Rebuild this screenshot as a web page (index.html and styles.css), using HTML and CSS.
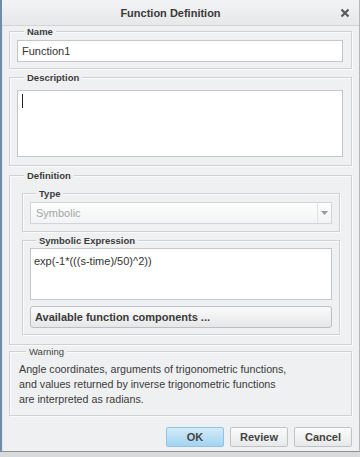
FILE: index.html
```html
<!DOCTYPE html>
<html lang="en">
<head>
  <meta charset="UTF-8" />
  <meta name="viewport" content="width=device-width, initial-scale=1.0"/>
  <title>Function Definition</title>
  <link rel="stylesheet" href="styles.css">
</head>
<body>
  <div class="dialog">
    <div class="title-bar">
      <span class="title">Function Definition</span>
      <button class="close-btn" title="Close">
        <svg width="10" height="10" viewBox="0 0 10 10"><path d="M1.5 1.5 L8.5 8.5 M8.5 1.5 L1.5 8.5" stroke="#5a5a5a" stroke-width="2.2"/></svg>
      </button>
    </div>

    <div class="content">
      <fieldset class="group group-name">
        <legend>Name</legend>
        <input type="text" class="field" value="Function1">
      </fieldset>

      <fieldset class="group group-desc">
        <legend>Description</legend>
        <div class="field area area-desc"><span class="caret"></span></div>
      </fieldset>

      <fieldset class="group group-def">
        <legend>Definition</legend>

        <fieldset class="group sub sub-type">
          <legend>Type</legend>
          <div class="select">
            <span class="select-value">Symbolic</span>
            <span class="select-arrow">
              <svg width="7" height="4" viewBox="0 0 7 4"><path d="M0 0 H7 L3.5 4 Z" fill="#9a9a9a"/></svg>
            </span>
          </div>
        </fieldset>

        <fieldset class="group sub sub-expr">
          <legend>Symbolic Expression</legend>
          <div class="field area area-expr">exp(-1*(((s-time)/50)^2))</div>
          <button class="wide-btn">Available function components ...</button>
        </fieldset>
      </fieldset>

      <fieldset class="group group-warn">
        <legend>Warning</legend>
        <p class="warn-text">Angle coordinates, arguments of trigonometric functions,<br>
          and values returned by inverse trigonometric functions<br>
          are interpreted as radians.</p>
      </fieldset>

      <div class="actions">
        <button class="btn btn-primary">OK</button>
        <button class="btn">Review</button>
        <button class="btn">Cancel</button>
      </div>
    </div>
  </div>
</body>
</html>
```

FILE: styles.css
```css
body {
  margin: 0;
  background: #d9dadb;
  font-family: "Liberation Sans", Arial, sans-serif;
  color: #333;
}
.dialog {
  width: 357px;
  height: 451px;
  background: #eff0f1;
  border-left: 2px solid #6f8dab;
  border-right: 1px solid #b4b7ba;
  border-bottom: 1px solid #8e9195;
  box-shadow: inset 1px 0 0 #dfe4e9;
}
.title-bar {
  height: 25px;
  display: flex;
  align-items: center;
  justify-content: center;
  position: relative;
  background: linear-gradient(#f2f3f4, #e7e8e9);
  border-bottom: 1px solid #d2d4d6;
  padding-right: 20px;
}
.title {
  font-size: 11px;
  font-weight: bold;
  color: #3a3a3a;
}
.close-btn {
  position: absolute;
  right: 9px;
  top: 8px;
  padding: 0;
  border: none;
  background: none;
  line-height: 0;
}
.content {
  padding: 0 7px 0 7px;
}
.group {
  margin: 0;
  padding: 0 8px 6px 7px;
  border: 1px solid #cfd2d5;
  box-shadow: inset 1px 1px 0 #fbfbfc, 1px 1px 0 #fbfbfc;
  min-width: 0;
}
.group legend {
  margin-left: 7px;
  padding: 0 3px;
  font-size: 9.5px;
  font-weight: bold;
  line-height: 11px;
  color: #3c3c3c;
  background: #eff0f1;
}
.field {
  display: block;
  box-sizing: border-box;
  width: 100%;
  background: #fff;
  border: 1px solid #c4c6c9;
  font-family: "Liberation Sans", Arial, sans-serif;
  font-size: 11px;
  color: #333;
}
input.field {
  height: 22px;
  padding: 0 4px;
  margin-top: 3px;
}
.group-desc {
  margin-top: 3px;
  padding-bottom: 8px;
}
.area-desc {
  height: 67px;
  margin-top: 7px;
  padding: 3px 4px;
}
.caret {
  display: block;
  width: 1px;
  height: 14px;
  background: #222;
}
.group-def {
  margin-top: 4px;
  padding: 7px 11px 9px 12px;
}
.group-def > legend {
  margin-left: 2px;
}
.sub {
  padding: 0 7px 7px 7px;
}
.sub legend {
  margin-left: 6px;
}
.sub-expr {
  margin-top: 3px;
  padding-bottom: 6px;
}
.select {
  margin-top: 3px;
  height: 22px;
  box-sizing: border-box;
  display: flex;
  align-items: stretch;
  border: 1px solid #d2d4d6;
  background: linear-gradient(#fdfdfd, #f2f3f4);
  font-size: 11px;
  color: #a3a5a7;
}
.select-value {
  flex: 1;
  display: flex;
  align-items: center;
  padding-left: 5px;
}
.select-arrow {
  width: 13px;
  display: flex;
  align-items: center;
  justify-content: center;
  border-left: 1px solid #e0e2e4;
}
.area-expr {
  height: 52px;
  margin-top: 2px;
  padding: 6px 3px;
}
.wide-btn {
  display: block;
  width: 100%;
  height: 22px;
  margin-top: 6px;
  padding: 0 4px;
  text-align: left;
  border: 1px solid #bcbec1;
  border-radius: 3px;
  background: linear-gradient(#fafafa, #e6e7e8);
  font-family: "Liberation Sans", Arial, sans-serif;
  font-size: 11px;
  font-weight: bold;
  color: #3a3a3a;
}
.group-warn {
  margin-top: 1px;
  padding: 0 8px 8px 9px;
}
.group-warn legend {
  font-weight: normal;
  color: #444;
}
.warn-text {
  margin: 5px 0 0;
  font-size: 10.7px;
  line-height: 15px;
  color: #3a3a3a;
}
.actions {
  display: flex;
  justify-content: flex-end;
  gap: 6px;
  margin-top: 11px;
}
.btn {
  width: 58px;
  height: 20px;
  padding: 0;
  border: 1px solid #c0c2c5;
  border-radius: 2px;
  background: linear-gradient(#fbfbfb, #e7e8e9);
  font-family: "Liberation Sans", Arial, sans-serif;
  font-size: 11px;
  font-weight: bold;
  color: #444;
}
.btn-primary {
  border-color: #8fc3e6;
  background: linear-gradient(#d4ebfa, #a3d3f2);
}
```
